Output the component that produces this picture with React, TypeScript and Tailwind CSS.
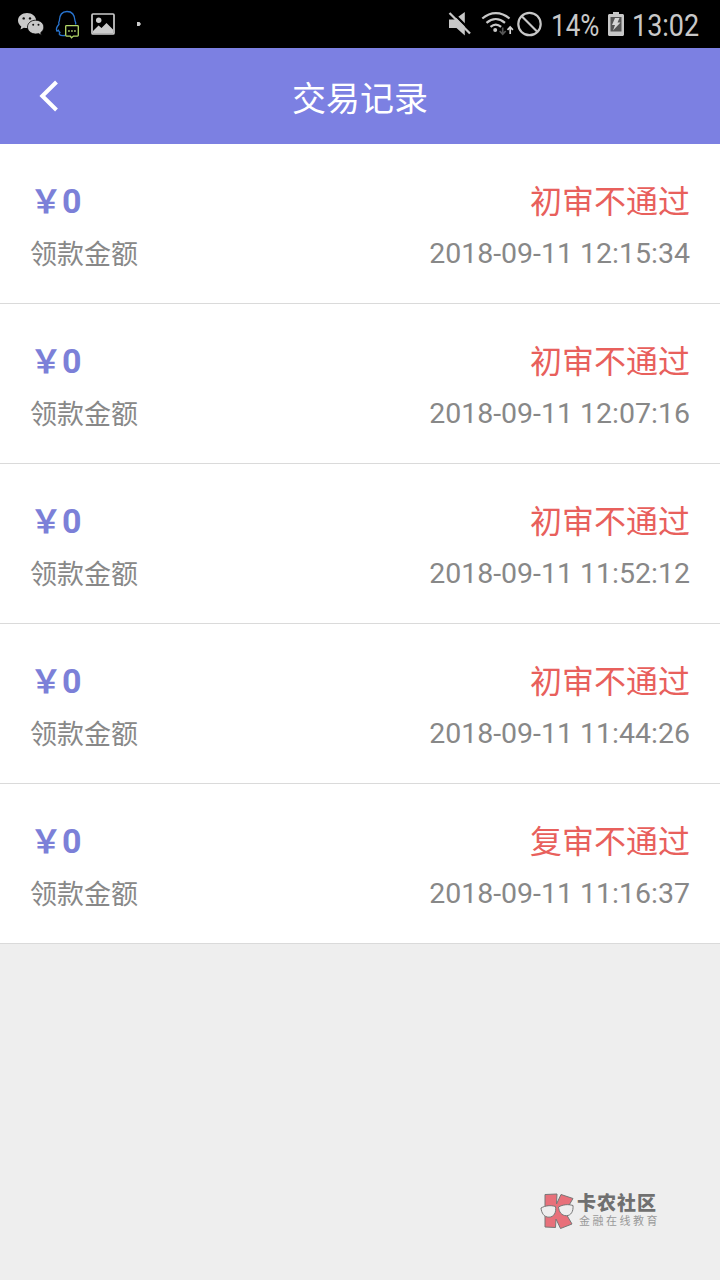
import React from 'react';

interface TransactionRecord {
  amount: number;
  status: string;
  time: string;
}

const records: TransactionRecord[] = [
  { amount: 0, status: '初审不通过', time: '2018-09-11 12:15:34' },
  { amount: 0, status: '初审不通过', time: '2018-09-11 12:07:16' },
  { amount: 0, status: '初审不通过', time: '2018-09-11 11:52:12' },
  { amount: 0, status: '初审不通过', time: '2018-09-11 11:44:26' },
  { amount: 0, status: '复审不通过', time: '2018-09-11 11:16:37' },
];

const NotificationIcons: React.FC = () => (
  <svg width="160" height="48" viewBox="0 0 160 48" fill="none">
    {/* WeChat */}
    <path d="M27 13c-5 0-9 3.300-9 7.600 0 2.400 1.300 4.500 3.300 5.900l-.8 3 3.400-1.800c1 .3 2 .4 3.100.4 5 0 9.200-3.300 9.200-7.500S32 13 27 13z" fill="#c8c8c8" />
    <path d="M35.700 20.200c-4.700 0-8.200 3-8.200 6.900s3.700 6.900 8.200 6.900c1 0 1.900-.1 2.800-.4l3 1.700-.8-2.600c1.900-1.300 3.100-3.300 3.100-5.600 0-3.900-3.600-6.900-8.100-6.900z" fill="#c8c8c8" stroke="#000" strokeWidth=".8" />
    <g fill="#111">
      <circle cx="23.700" cy="18.400" r="1.200" />
      <circle cx="30" cy="18.400" r="1.200" />
      <circle cx="33.200" cy="24.800" r="1" />
      <circle cx="38.500" cy="24.800" r="1" />
    </g>
    {/* QQ */}
    <path d="M65 35.500c-2 .3-4.500.1-5.600-1-.5-.6 0-1.300.6-1.900-.9-.7-1.300-1.700-1.700-2.600-.5.8-1.300 1.300-1.600.8-.6-1.500.2-4.200 2.300-6.500-.5-1.200-.4-2.300.3-3.400C59.500 15.200 62 11.500 67 11.500s7.700 3.700 8 9.300c.6 1 .9 2.200.5 3.700" stroke="#2874cf" strokeWidth="1.300" strokeLinejoin="round" />
    <path d="M66.500 25.700h11c.5 0 .8.300.8.800v8.800c0 .5-.3.800-.8.800h-4l-2 1.600-1.200-1.600h-3.800c-.5 0-.8-.3-.8-.8v-8.800c0-.5.300-.8.800-.8z" stroke="#b4d968" strokeWidth="1.300" />
    <path d="M68.200 30.200h1.500v1.500h-1.500zM71.200 30.200h1.500v1.500h-1.500zM74.200 30.200h1.500v1.500h-1.500z" fill="#c5e77e" />
    {/* Gallery */}
    <rect x="92" y="14" width="22" height="20" rx="1" stroke="#ccc" strokeWidth="1.700" />
    <circle cx="98.700" cy="20.300" r="2.700" fill="#ccc" />
    <path d="M93 31l5.500-5.500 3 2.500 5-5 6.500 6.500V33.500H93z" fill="#ccc" />
    <path d="M137 22h2.500l1.500 2-1.500 2H137z" fill="#ccc" />
  </svg>
);

const SystemIcons: React.FC = () => (
  <svg width="104" height="48" viewBox="440 0 104 48" fill="none">
    {/* Muted speaker */}
    <path d="M449 19.500h5.500l10.300-7.500v23.500l-8.300-7.500H449z" fill="#c8c8c8" />
    <path d="M453 13l17.500 17.500" stroke="#000" strokeWidth="2.400" />
    <path d="M449.500 13l20.500 20.500" stroke="#c8c8c8" strokeWidth="2.300" />
    {/* Wi-Fi */}
    <g stroke="#c8c8c8" strokeWidth="2.200">
      <path d="M482.300 18.500c8.300-7.300 18.900-7.300 27.200 0" />
      <path d="M486.500 22.900c5.800-5 12.700-5 18.500 0" />
      <path d="M490.500 26.900c3.300-2.900 7.300-2.900 10.600 0" />
    </g>
    <circle cx="495.200" cy="30" r="2" fill="#c8c8c8" />
    <path d="M502.700 27.500v6.500M499.700 31l3 3.300 3-3.300" stroke="#555" strokeWidth="1.700" />
    <path d="M510.200 34v-6.500M507.500 29.800l2.700-2.800 2.700 2.800" stroke="#d6d6d6" strokeWidth="1.700" />
    {/* Blocked */}
    <circle cx="529.500" cy="24" r="11.200" stroke="#c8c8c8" strokeWidth="2.200" />
    <path d="M521.500 16l16 16" stroke="#c8c8c8" strokeWidth="2.200" />
  </svg>
);

const BatteryIcon: React.FC = () => (
  <svg width="16" height="24" viewBox="0 0 16 24">
    <path d="M5 0h6v2h3.500c.8 0 1.500.7 1.500 1.500v19c0 .8-.7 1.500-1.500 1.500h-13C.7 24 0 23.300 0 22.500v-19C0 2.700.7 2 1.500 2H5z" fill="#c8c8c8" />
    <path d="M2.500 5h11v14.500h-11z" fill="#555" />
    <path d="M7 6h4.500L9.500 10.500H12.500L5 18.500l2-5.500H4z" fill="#d6d6d6" />
  </svg>
);

const StatusBar: React.FC = () => (
  <div className="flex h-12 items-center justify-between bg-black text-[#c8c8c8]">
    <NotificationIcons />
    <div className="flex w-[280px] items-center">
      <SystemIcons />
      <span className="ml-[7px] w-[50px] origin-left scale-x-[0.84] whitespace-nowrap pt-[3px] text-[31px] leading-[48px]">14%</span>
      <span className="ml-[7px]"><BatteryIcon /></span>
      <span className="ml-[8px] w-[70px] origin-left scale-x-[0.87] whitespace-nowrap pt-[3px] text-[31px] leading-[48px]">13:02</span>
    </div>
  </div>
);

const Header: React.FC = () => (
  <header className="grid h-24 grid-cols-[96px_1fr_96px] items-center bg-[#7c80e2] text-white">
    <svg className="ml-9" width="28" height="36" viewBox="0 0 28 36" fill="none">
      <path d="M20.500 4L6.300 18l14.200 14" stroke="currentColor" strokeWidth="4" />
    </svg>
    <h1 className="pt-[5px] text-center text-[34px] leading-[48px]">交易记录</h1>
  </header>
);

const RecordRow: React.FC<{ record: TransactionRecord }> = ({ record }) => (
  <li className="flex h-40 justify-between border-b border-[#dadada] bg-white px-[30px] pt-[33px]">
    <div>
      <p className="flex h-[52px] text-[32px] leading-[48px] font-bold text-[#7c80d8]">
        <span className="leading-[50px]">{'\uffe5'}</span>
        <span className="text-[34px]">{record.amount}</span>
      </p>
      <p className="text-[27px] leading-[52px] text-[#888]">领款金额</p>
    </div>
    <div className="text-right">
      <p className="h-[52px] text-[32px] leading-[51px] text-[#e8605c]">{record.status}</p>
      <p className="text-[28.500px] leading-[50px] text-[#888]">{record.time}</p>
    </div>
  </li>
);

const Watermark: React.FC = () => (
  <div className="absolute right-[60px] bottom-[50px] flex items-center">
    <svg width="36" height="38" viewBox="0 0 36 38">
      <path d="M5 2.500l12-.5-.5 10L21 2.500l12 4-8 13.500 7 12-11.500 4.500L16 27l-.5 8.500L5 35z" fill="#e8707a" stroke="#777" strokeWidth="1" />
      <g fill="#eee" stroke="#777" strokeWidth="1">
        <path d="M1 16c4.500-2.500 9.500-3 14.500-1.500C16.500 20.500 14 25 9 25.200 4 25.200 1.500 21 1 16z" />
        <path d="M18.500 15c4.500-2.500 9.500-3 14.500-1.500.5 6-2 10-6.500 10.200-5 0-7.500-3.700-8-8.700z" />
      </g>
    </svg>
    <div className="ml-px w-[83px] whitespace-nowrap">
      <p className="h-[22px] text-[19px] leading-[20px] font-black tracking-[1px] text-[#707070]">卡农社区</p>
      <p className="ml-[2px] text-[11px] leading-[12px] tracking-[2.500px] text-[#999]">金融在线教育</p>
    </div>
  </div>
);

const App: React.FC = () => {
  return (
    <div className="relative h-[1280px] w-[720px] overflow-hidden bg-[#eee] font-[Roboto,'Noto_Sans_CJK_SC',sans-serif]">
      <StatusBar />
      <Header />
      <ul>
        {records.map(record => (
          <RecordRow key={record.time} record={record} />
        ))}
      </ul>
      <Watermark />
    </div>
  );
};

export default App;
